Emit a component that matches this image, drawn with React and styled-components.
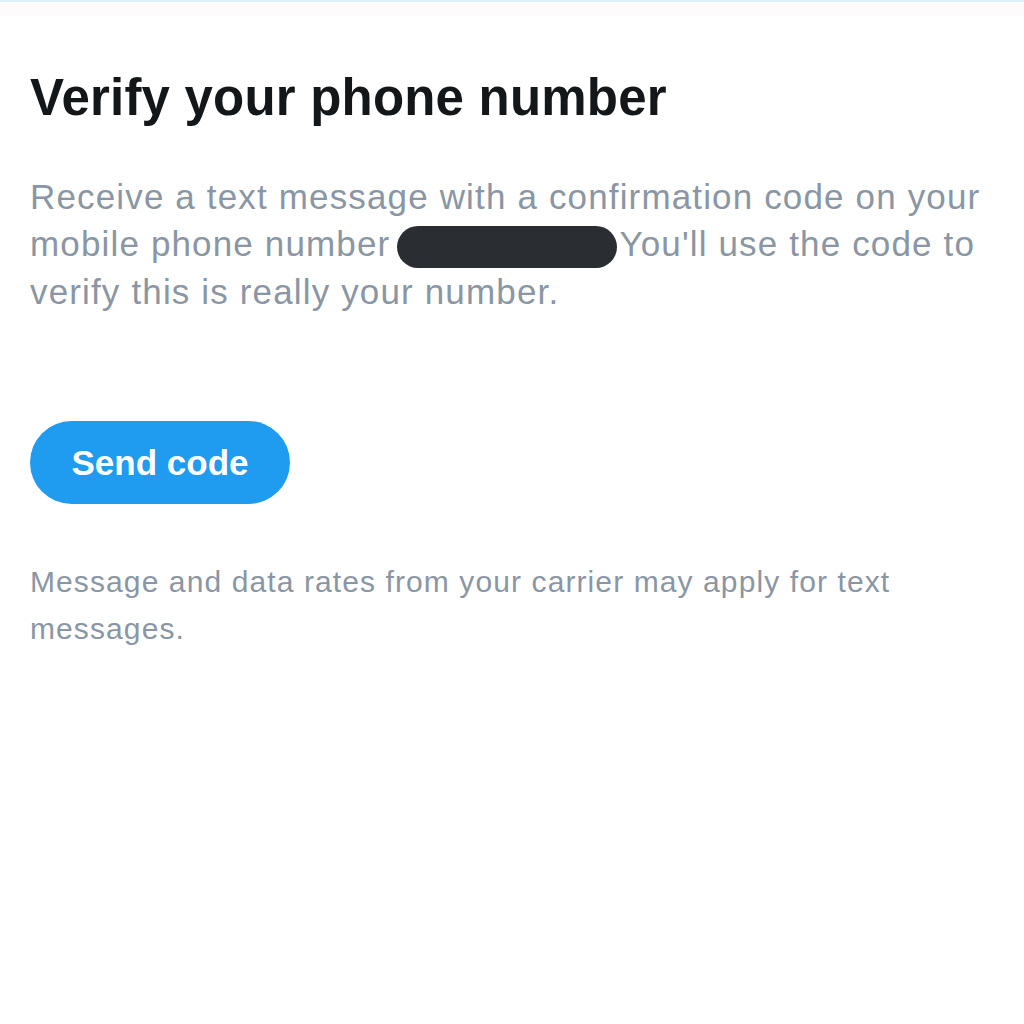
import React from 'react';
import styled, { createGlobalStyle } from 'styled-components';

const GlobalStyle = createGlobalStyle`
  html, body {
    margin: 0;
    padding: 0;
    background: #ffffff;
  }
  body {
    font-family: "Liberation Sans", Arial, sans-serif;
  }
`;

const Page = styled.div`
  width: 1024px;
  min-height: 1024px;
  background: #ffffff;
`;

const TopStrip = styled.div`
  height: 14px;
  border-top: 2px solid #d9f2fb;
  background: #fdfbfc;
`;

const Content = styled.div`
  padding: 54px 30px 0 30px;
  display: flex;
  flex-direction: column;
  align-items: flex-start;
`;

const Title = styled.h1`
  margin: 0;
  font-size: 51px;
  line-height: 56px;
  font-weight: 700;
  color: #14171a;
  letter-spacing: 0.2px;
`;

const Lead = styled.p`
  margin: 47px 0 0 0;
  font-size: 35px;
  line-height: 47px;
  letter-spacing: 1.15px;
  color: #8a96a3;
  width: 980px;
`;

const Redacted = styled.span`
  display: inline-block;
  width: 220px;
  height: 42px;
  border-radius: 21px;
  background: #2a2e33;
  vertical-align: -12px;
  margin: 0 2px 0 7px;
`;

const PrimaryButton = styled.button`
  margin-top: 106px;
  width: 260px;
  height: 83px;
  padding: 0;
  border: none;
  border-radius: 42px;
  background: #1f9bf0;
  color: #ffffff;
  font-family: inherit;
  font-size: 35px;
  font-weight: 700;
  cursor: pointer;
`;

const Note = styled.p`
  margin: 54px 0 0 0;
  font-size: 30px;
  line-height: 47px;
  letter-spacing: 1.1px;
  color: #8a96a3;
  width: 900px;
`;

export default function App() {
  return (
    <Page>
      <GlobalStyle />
      <TopStrip />
      <Content>
        <Title>Verify your phone number</Title>
        <Lead>
          Receive a text message with a confirmation code on your mobile phone number
          <Redacted />You'll use the code to verify this is really your number.
        </Lead>
        <PrimaryButton>Send code</PrimaryButton>
        <Note>Message and data rates from your carrier may apply for text messages.</Note>
      </Content>
    </Page>
  );
}
